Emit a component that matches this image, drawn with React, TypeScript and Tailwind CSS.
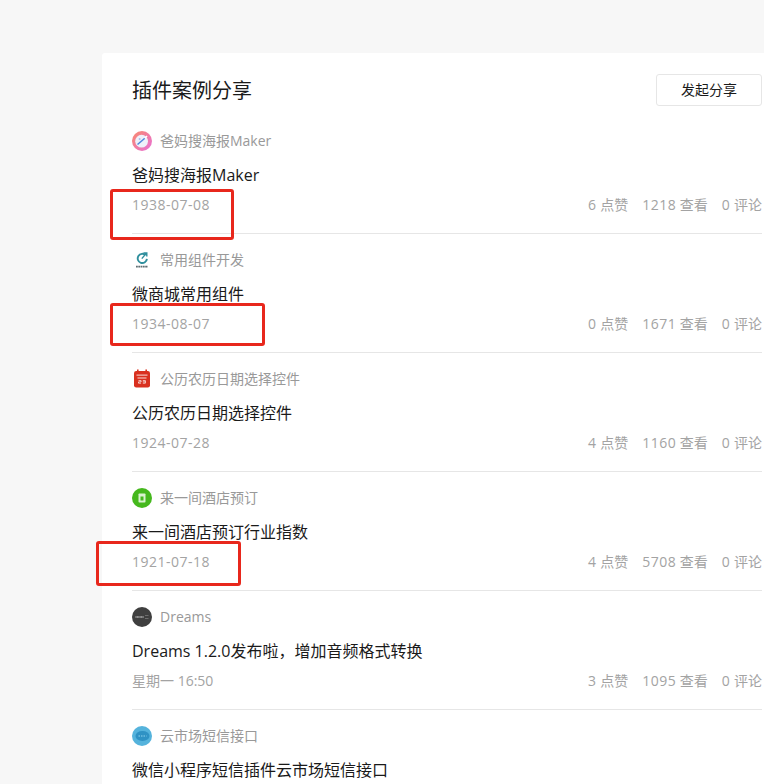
import type { ReactNode } from "react";

type Post = {
  name: string;
  title: string;
  date?: string;
  likes?: number;
  views?: number;
  comments?: number;
  icon: ReactNode;
};

const posts: Post[] = [
  {
    name: "爸妈搜海报Maker",
    title: "爸妈搜海报Maker",
    date: "1938-07-08",
    likes: 6,
    views: 1218,
    comments: 0,
    icon: (
      <svg viewBox="0 0 20 20" className="w-5 h-5">
        <defs>
          <linearGradient id="g1" x1="0" y1="0" x2="1" y2="1">
            <stop offset="0" stopColor="#f98a6c" />
            <stop offset="1" stopColor="#e86fd8" />
          </linearGradient>
        </defs>
        <circle cx="10" cy="10" r="10" fill="url(#g1)" />
        <circle cx="9.6" cy="10.2" r="6.4" fill="#eef1fa" />
        <path d="M5.5 13.5 12.8 7.2" stroke="#4f86dd" strokeWidth="1.5" />
        <path d="M12.8 7.2 15 5" stroke="#ffffff" strokeWidth="1.6" />
        <circle cx="7.6" cy="8" r="1" fill="#a9bfec" />
      </svg>
    ),
  },
  {
    name: "常用组件开发",
    title: "微商城常用组件",
    date: "1934-08-07",
    likes: 0,
    views: 1671,
    comments: 0,
    icon: (
      <svg viewBox="0 0 20 20" className="w-5 h-5">
        <path d="M13.6 5.2a4.6 4.6 0 1 0 1.3 3.6" fill="none" stroke="#2f8f9d" strokeWidth="1.9" />
        <path d="M9.8 8.6 14.2 3.4M11.4 3h3.4v3.4" fill="none" stroke="#2f8f9d" strokeWidth="1.4" />
        <path d="M4 16.6h12" stroke="#5f6d72" strokeWidth="1.6" strokeDasharray="1.8 0.5" />
      </svg>
    ),
  },
  {
    name: "公历农历日期选择控件",
    title: "公历农历日期选择控件",
    date: "1924-07-28",
    likes: 4,
    views: 1160,
    comments: 0,
    icon: (
      <svg viewBox="0 0 20 20" className="w-5 h-5">
        <rect x="2" y="2" width="16" height="16.5" rx="2.2" fill="#d9301f" />
        <rect x="5" y="0.5" width="1.6" height="3" fill="#d9301f" />
        <rect x="13.4" y="0.5" width="1.6" height="3" fill="#d9301f" />
        <rect x="4.5" y="5.6" width="11" height="1" fill="#f9dcd8" />
        <rect x="5.5" y="8.5" width="9" height="1" fill="#f9dcd8" />
        <path d="M6.5 11h2.6v1.3H6.5v1.3h2.6M10.8 11h2.6v2.6h-2.6M10.8 12.3h2.6" fill="none" stroke="#ffffff" strokeWidth="0.7" transform="translate(0 0.6)" />
      </svg>
    ),
  },
  {
    name: "来一间酒店预订",
    title: "来一间酒店预订行业指数",
    date: "1921-07-18",
    likes: 4,
    views: 5708,
    comments: 0,
    icon: (
      <svg viewBox="0 0 20 20" className="w-5 h-5">
        <circle cx="10" cy="10" r="10" fill="#45b81d" />
        <rect x="6.5" y="5.5" width="7" height="9" rx="0.8" fill="#d9f2cf" />
        <rect x="8.5" y="8.5" width="3" height="4" fill="#45b81d" />
      </svg>
    ),
  },
  {
    name: "Dreams",
    title: "Dreams 1.2.0发布啦，增加音频格式转换",
    date: "星期一 16:50",
    likes: 3,
    views: 1095,
    comments: 0,
    icon: (
      <svg viewBox="0 0 20 20" className="w-5 h-5">
        <circle cx="10" cy="10" r="10" fill="#3f3f3f" />
        <path d="M3.5 10h8.5" stroke="#b5b5b5" strokeWidth="1.4" strokeDasharray="1 0.4" />
        <path d="M13 8.5h3.5M13 11.5h3.5" stroke="#8d8d8d" strokeWidth="0.6" />
      </svg>
    ),
  },
  {
    name: "云市场短信接口",
    title: "微信小程序短信插件云市场短信接口",
    icon: (
      <svg viewBox="0 0 20 20" className="w-5 h-5">
        <circle cx="10" cy="10" r="10" fill="#55b3dc" />
        <ellipse cx="10.5" cy="10" rx="7" ry="5" fill="#2f92c4" />
        <path d="M6.5 10h8" stroke="#8fd3ee" strokeWidth="1.2" strokeDasharray="1.5 1" />
      </svg>
    ),
  },
];

function Row({ post }: { post: Post }) {
  return (
    <div className="h-[119px] border-b border-[#e6e6e6] pt-4 shrink-0">
      <div className="flex items-center h-5">
        <div className="w-5 h-5 mr-2 shrink-0">{post.icon}</div>
        <span className="text-sm text-[#999] leading-5">{post.name}</span>
      </div>
      <div className="mt-3 text-base leading-6 text-[#1a1a1a]">{post.title}</div>
      {post.date && (
        <div className="mt-2 flex justify-between text-sm leading-5 text-[#a3a3a3]">
          <span className={post.date.startsWith("星期") ? "" : "tracking-[0.5px]"}>{post.date}</span>
          <div className="flex gap-[14px]">
            <span>
              <span className="tracking-[0.5px]">{post.likes}</span> 点赞
            </span>
            <span>
              <span className="tracking-[0.5px]">{post.views}</span> 查看
            </span>
            <span>
              <span className="tracking-[0.5px]">{post.comments}</span> 评论
            </span>
          </div>
        </div>
      )}
    </div>
  );
}

export default function App() {
  return (
    <div className="relative h-[784px] w-[764px] overflow-hidden bg-[#f7f7f7] font-['Open_Sans','Noto_Sans_CJK_SC',sans-serif]">
      <div className="absolute left-[102px] top-[53px] w-[700px] h-[760px] bg-white rounded-t-[3px] pl-[30px] pr-[40px]">
        <div className="flex items-start justify-between h-[62px] pt-[21px]">
          <h1 className="text-xl leading-[32px] mt-[1px] text-[#1a1a1a]">插件案例分享</h1>
          <button className="w-[106px] h-[32px] border border-[#e6e6e6] rounded-[3px] bg-white text-sm text-[#1a1a1a]">
            发起分享
          </button>
        </div>
        <div className="flex flex-col">
          {posts.map((p) => (
            <Row key={p.title} post={p} />
          ))}
        </div>
      </div>

      {/* red review marks drawn over the screenshot */}
      <div className="absolute left-[110px] top-[189px] w-[124px] h-[51px] border-[3px] border-[#e8271c] rounded-[3px]" />
      <div className="absolute left-[110px] top-[303px] w-[155px] h-[43px] border-[3px] border-[#e8271c] rounded-[3px]" />
      <div className="absolute left-[96px] top-[541px] w-[145px] h-[45px] border-[3px] border-[#e8271c] rounded-[3px]" />
    </div>
  );
}
